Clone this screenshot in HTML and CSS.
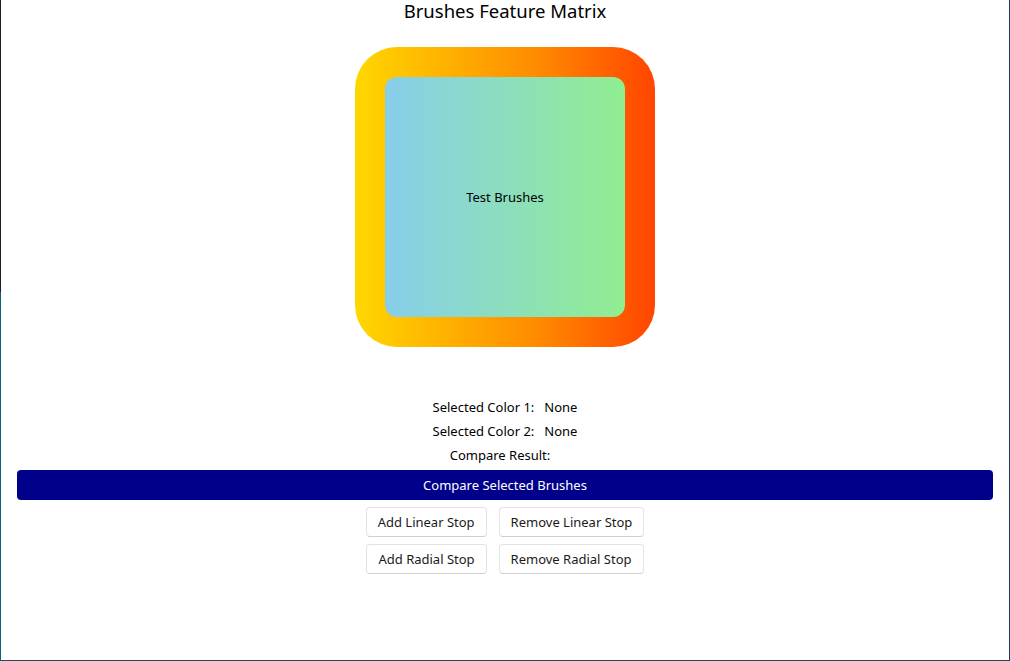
FILE: index.html
```html
<!DOCTYPE html>
<html>
<head>
<meta charset="utf-8">
<link rel="stylesheet" href="styles.css">
</head>
<body>
<div class="window">
  <h1 class="title">Brushes Feature Matrix</h1>
  <div class="preview-wrap">
    <div class="preview">
      <div class="preview-inner">Test Brushes</div>
    </div>
  </div>
  <div class="info">
    <div class="info-row"><span>Selected Color 1:</span><span>None</span></div>
    <div class="info-row"><span>Selected Color 2:</span><span>None</span></div>
    <div class="info-row"><span>Compare Result:</span><span></span></div>
  </div>
  <button class="compare">Compare Selected Brushes</button>
  <div class="btn-row">
    <button class="btn">Add Linear Stop</button>
    <button class="btn">Remove Linear Stop</button>
  </div>
  <div class="btn-row">
    <button class="btn">Add Radial Stop</button>
    <button class="btn">Remove Radial Stop</button>
  </div>
</div>
</body>
</html>
```
FILE: styles.css
```css
html, body {
  margin: 0;
  padding: 0;
}
body {
  width: 1010px;
  height: 661px;
  overflow: hidden;
  font-family: "Noto Sans", "Open Sans", sans-serif;
  color: #000;
  background: linear-gradient(to bottom, #1e1e1e 0, #1e1e1e 292px, #0e5f7e 292px, #0e5f7e 100%) 0 0 / 1px 100% no-repeat, #ffffff;
}
.window {
  box-sizing: border-box;
  width: 1009px;
  height: 661px;
  margin-left: 1px;
  border-right: 1px solid #1d3a57;
  border-bottom: 1px solid #1d4a5e;
  background: #ffffff;
  display: flex;
  flex-direction: column;
  align-items: center;
}
.title {
  margin: 0;
  font-size: 18.5px;
  font-weight: 400;
  line-height: 22px;
  height: 22px;
}
.preview-wrap {
  margin-top: 25px;
}
.preview {
  width: 300px;
  height: 300px;
  box-sizing: border-box;
  padding: 30px;
  border-radius: 42px;
  background: linear-gradient(to right, #ffd700 0%, #ff8c00 60%, #ff4500 100%);
}
.preview-inner {
  width: 100%;
  height: 100%;
  border-radius: 12px;
  background: linear-gradient(to right, #87ceeb, #90ee90);
  display: flex;
  align-items: center;
  justify-content: center;
  font-size: 13px;
}
.info {
  margin-top: 48px;
  display: flex;
  flex-direction: column;
  align-items: center;
}
.info-row {
  display: flex;
  gap: 10px;
  height: 24px;
  align-items: center;
  font-size: 13px;
}
.compare {
  margin-top: 3px;
  align-self: stretch;
  margin-left: 16px;
  margin-right: 16px;
  height: 30px;
  border: 0;
  border-radius: 4px;
  background: #00008b;
  color: #ffffff;
  font-family: inherit;
  font-size: 13px;
  padding: 0;
}
.btn-row {
  display: flex;
  gap: 12px;
  margin-top: 7px;
}
.btn {
  height: 30px;
  padding: 0 11px;
  background: #ffffff;
  border: 1px solid #e3e3e3;
  border-bottom-color: #cfcfcf;
  border-radius: 4px;
  font-family: inherit;
  font-size: 13px;
  color: #1a1a1a;
}
```
